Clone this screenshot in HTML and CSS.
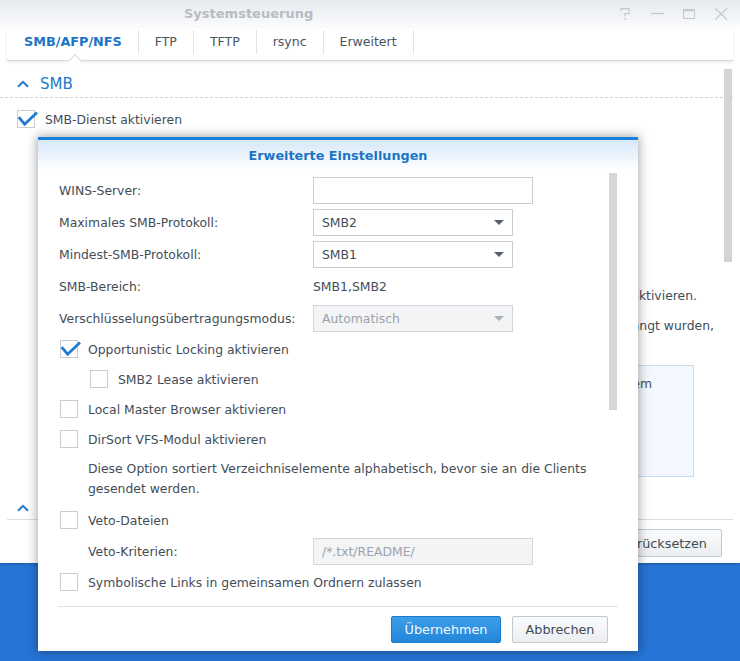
FILE: index.html
```html
<!DOCTYPE html>
<html lang="de">
<head>
<meta charset="utf-8">
<title>Systemsteuerung</title>
<link rel="stylesheet" href="styles.css">
</head>
<body>
<div class="desktop">
  <div class="window">
    <div class="titlebar">
      <div class="wtitle">Systemsteuerung</div>
      <div class="wctrls">
        <svg class="ctl" width="14" height="14" viewBox="0 0 14 14"><path d="M3 4.2V1.6H11V6.6H7V9.6" fill="none" stroke="#c5c9ce" stroke-width="1.2"/><rect x="6.3" y="11.2" width="1.5" height="1.6" fill="#c5c9ce"/></svg>
        <svg class="ctl" width="14" height="14" viewBox="0 0 14 14"><path d="M1 6.5H14" fill="none" stroke="#c5c9ce" stroke-width="1.3"/></svg>
        <svg class="ctl" width="14" height="14" viewBox="0 0 14 14"><rect x="1.5" y="2.5" width="11" height="9" fill="none" stroke="#c5c9ce" stroke-width="1.1"/><path d="M1.5 3.6H12.5" stroke="#c5c9ce" stroke-width="1.4"/></svg>
        <svg class="ctl" width="14" height="14" viewBox="0 0 14 14"><path d="M1.2 1.2L13 12.8M13 1.2L1.2 12.8" fill="none" stroke="#c5c9ce" stroke-width="1.2"/></svg>
      </div>
    </div>
    <div class="tabbar">
      <div class="tab active">SMB/AFP/NFS</div>
      <div class="tab">FTP</div>
      <div class="tab">TFTP</div>
      <div class="tab">rsync</div>
      <div class="tab">Erweitert</div>
    </div>
    <div class="wbody">
      <div class="sec-head">
        <svg class="chev" width="12" height="8" viewBox="0 0 12 8"><path d="M1 6.8L6 1.8L11 6.8" fill="none" stroke="#1f78cc" stroke-width="2"/></svg>
        <span class="sec-title">SMB</span>
      </div>
      <div class="bg-cbrow">
        <span class="cb"><svg width="22" height="18" viewBox="0 0 22 18"><path d="M1.7 7.2L7.6 14.2L20 2.6" fill="none" stroke="#1e7ad3" stroke-width="2.8"/></svg></span>
        <span>SMB-Dienst aktivieren</span>
      </div>
      <div class="bg-row"><span class="bg-label"></span><span class="bg-input"></span></div>
      <div class="bg-line l1">Dienst aktivieren.</div>
      <div class="bg-line l2">verlangt wurden,</div>
      <div class="bg-box">Dateisystem</div>
      <div class="sec-head2">
        <svg class="chev" width="12" height="8" viewBox="0 0 12 8"><path d="M1 6.8L6 1.8L11 6.8" fill="none" stroke="#1f78cc" stroke-width="2"/></svg>
      </div>
      <div class="wfoot">
        <button class="btn wbtn">Zurücksetzen</button>
      </div>
    </div>
    <div class="wscroll"></div>
  </div>

  <div class="dialog">
    <div class="dlg-head">Erweiterte Einstellungen</div>
    <div class="dlg-body">
      <div class="frow"><span class="flabel">WINS-Server:</span><span class="field text"></span></div>
      <div class="frow"><span class="flabel">Maximales SMB-Protokoll:</span><span class="field select"><span>SMB2</span><i class="arrow"></i></span></div>
      <div class="frow"><span class="flabel">Mindest-SMB-Protokoll:</span><span class="field select"><span>SMB1</span><i class="arrow"></i></span></div>
      <div class="frow"><span class="flabel">SMB-Bereich:</span><span class="fvalue">SMB1,SMB2</span></div>
      <div class="frow"><span class="flabel">Verschlüsselungsübertragungsmodus:</span><span class="field select disabled"><span>Automatisch</span><i class="arrow"></i></span></div>
      <div class="crow">
        <span class="cb"><svg width="22" height="18" viewBox="0 0 22 18"><path d="M1.7 7.2L7.6 14.2L20 2.6" fill="none" stroke="#1e7ad3" stroke-width="2.8"/></svg></span>
        <span>Opportunistic Locking aktivieren</span>
      </div>
      <div class="crow sub"><span class="cb"></span><span>SMB2 Lease aktivieren</span></div>
      <div class="crow"><span class="cb"></span><span>Local Master Browser aktivieren</span></div>
      <div class="crow"><span class="cb"></span><span>DirSort VFS-Modul aktivieren</span></div>
      <p class="desc">Diese Option sortiert Verzeichniselemente alphabetisch, bevor sie an die Clients gesendet werden.</p>
      <div class="crow"><span class="cb"></span><span>Veto-Dateien</span></div>
      <div class="frow sub2"><span class="flabel">Veto-Kriterien:</span><span class="field text disabled">/*.txt/README/</span></div>
      <div class="crow"><span class="cb"></span><span>Symbolische Links in gemeinsamen Ordnern zulassen</span></div>
    </div>
    <div class="dlg-scroll"></div>
    <div class="dlg-foot">
      <button class="btn primary">Übernehmen</button>
      <button class="btn cancel">Abbrechen</button>
    </div>
  </div>
</div>
</body>
</html>
```

FILE: styles.css
```css
* { box-sizing: border-box; }
html, body { margin: 0; padding: 0; }
body {
  width: 740px;
  height: 661px;
  overflow: hidden;
  background: #2674d6;
  font-family: "DejaVu Sans", Verdana, sans-serif;
  font-size: 12.4px;
  color: #434d57;
}
.desktop { position: relative; width: 740px; height: 661px; }

/* background window */
.window {
  position: relative;
  height: 563px;
  background: #fff;
  display: flex;
  flex-direction: column;
  box-shadow: 0 1px 3px rgba(0,0,0,.25);
}
.titlebar {
  flex: none;
  height: 28px;
  display: flex;
  align-items: center;
  background: linear-gradient(#e7ebef, #f5f7f9 75%, #fdfdfe);
}
.wtitle {
  padding-left: 184px;
  font-weight: bold;
  font-size: 13px;
  line-height: 28px;
  color: #b8bcc1;
}
.wctrls {
  margin-left: auto;
  display: flex;
  gap: 18px;
  padding-right: 12px;
}
.ctl { display: block; }

.tabbar {
  flex: none;
  position: relative;
  margin: 0 7px;
  height: 33px;
  padding-top: 2px;
  display: flex;
  align-items: flex-start;
  background: #fff;
  border-bottom: 1px solid #d6dade;
  box-shadow: 0 1px 3px rgba(0,0,0,.10);
}
.tab {
  position: relative;
  height: 24px;
  line-height: 24px;
  padding: 0 16px;
  border-right: 1px solid #e2e5e8;
  font-size: 12.5px;
  color: #4a545e;
}
.tab.active {
  padding-left: 17px;
  font-weight: bold;
  font-size: 12.8px;
  color: #1c74c6;
}
.tab.active::after {
  content: "";
  position: absolute;
  left: 63px;
  top: 25.5px;
  width: 9px;
  height: 9px;
  background: #fff;
  border-left: 1px solid #d6dade;
  border-top: 1px solid #d6dade;
  transform: rotate(45deg);
}

.wbody { flex: 1; display: flex; flex-direction: column; }
.sec-head {
  height: 37px;
  padding: 10px 0 0 17px;
  margin-right: 7px;
  display: flex;
  align-items: center;
  border-bottom: 1px dashed #cfd3d7;
}
.chev { display: block; }
.sec-title {
  margin-left: 11px;
  font-size: 15px;
  color: #2078cc;
}
.bg-cbrow {
  height: 30px;
  margin-top: 6px;
  padding-left: 17px;
  display: flex;
  align-items: center;
}
.bg-row {
  height: 32px;
  padding-left: 45px;
  display: flex;
  align-items: center;
}
.bg-label { width: 155px; }
.bg-input { width: 200px; height: 27px; border: 1px solid #cdd2d7; }
.bg-line {
  padding-left: 45px;
  line-height: 20px;
  white-space: nowrap;
  overflow: hidden;
  text-align: right;
}
.bg-line.l1 { margin-top: 120px; margin-right: 43px; }
.bg-line.l2 { margin-top: 10px; margin-right: 26px; }
.bg-box {
  margin: 29px 46px 0 45px;
  height: 112px;
  padding: 8px 41px 0 0;
  line-height: 20px;
  text-align: right;
  white-space: nowrap;
  border: 1px solid #c9dcee;
  background: #f2f8fd;
}
.sec-head2 {
  margin: 20px 7px 0;
  height: 23px;
  padding-left: 10px;
  display: flex;
  align-items: center;
  border-bottom: 1px solid #dde0e3;
}
.wfoot {
  padding: 9px 18px 0 0;
  display: flex;
  justify-content: flex-end;
  gap: 10px;
}
.wscroll {
  position: absolute;
  left: 724px;
  top: 69px;
  width: 8px;
  height: 193px;
  background: #d4d4d4;
}

/* checkboxes */
.cb {
  position: relative;
  flex: none;
  width: 18px;
  height: 18px;
  margin-right: 10px;
  border: 1px solid #c9cdd1;
  background: #fff;
}
.cb svg {
  position: absolute;
  left: -1px;
  top: -1px;
  overflow: visible;
}

/* buttons */
.btn {
  height: 27px;
  padding: 0;
  font-family: inherit;
  font-size: 12.8px;
  color: #414b55;
  border: 1px solid #c3c9cf;
  border-radius: 2px;
  background: linear-gradient(#f9fafb, #eceff2);
}
.wbtn { height: 28px; padding: 0 14px; }
.btn.primary {
  width: 110px;
  color: #f4faff;
  border-color: #1d7bcb;
  background: linear-gradient(#3d9eea, #2286da);
}
.btn.cancel { width: 96px; }

/* dialog */
.dialog {
  position: absolute;
  left: 38px;
  top: 137px;
  width: 600px;
  height: 514px;
  display: flex;
  flex-direction: column;
  background: #fff;
  border-top: 3px solid #1a7fd8;
  box-shadow: 0 0 10px 1px rgba(0,0,0,.35);
}
.dlg-head {
  flex: none;
  height: 30px;
  line-height: 31px;
  text-align: center;
  font-weight: bold;
  font-size: 12.8px;
  color: #1c74c6;
  background: linear-gradient(#d6e8f9, #fff);
}
.dlg-body {
  flex: none;
  height: 436px;
  overflow: hidden;
  padding: 4px 0 0 21px;
}
.frow {
  height: 32px;
  display: flex;
  align-items: center;
}
.flabel { flex: none; width: 254px; }
.frow.sub2 { padding-left: 29px; }
.frow.sub2 .flabel { width: 225px; }
.field {
  height: 27px;
  display: flex;
  align-items: center;
  padding: 0 8px;
  border: 1px solid #c8cdd2;
  background: #fff;
  color: #434d57;
}
.field.text { width: 220px; }
.field.select { width: 200px; justify-content: space-between; }
.field.disabled {
  background: #f3f4f6;
  border-color: #d3d7db;
  color: #9ca3aa;
}
.arrow {
  width: 0;
  height: 0;
  border-left: 5px solid transparent;
  border-right: 5px solid transparent;
  border-top: 5px solid #56606a;
}
.field.disabled .arrow { border-top-color: #aab1b8; }
.crow {
  height: 30px;
  padding-left: 1px;
  display: flex;
  align-items: center;
}
.crow.sub { padding-left: 31px; }
.desc {
  width: 520px;
  margin: 0 0 0 29px;
  padding: 5px 0 6px;
  line-height: 20px;
}
.dlg-scroll {
  position: absolute;
  left: 571px;
  top: 33px;
  width: 8px;
  height: 237px;
  background: #d6d6d6;
}
.dlg-foot {
  flex: none;
  margin: 0 20px;
  padding: 9px 10px 0 0;
  display: flex;
  justify-content: flex-end;
  gap: 11px;
  border-top: 1px solid #e0e3e6;
}
```
